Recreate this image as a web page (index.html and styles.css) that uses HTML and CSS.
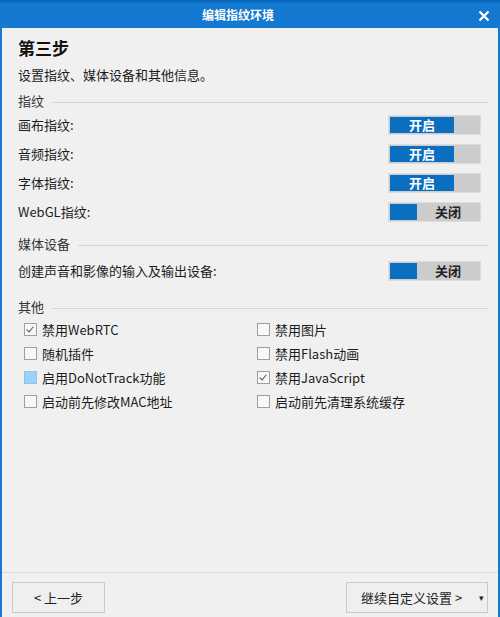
FILE: index.html
```html
<!DOCTYPE html>
<html lang="zh-CN">
  <head>
    <title>编辑指纹环境</title>
    <meta charset="UTF-8">
    <link rel="stylesheet" href="styles.css">
  </head>
  <body>
  <div class="window">
    <!--Title bar-->
    <div class="titlebar">
      <span class="title">编辑指纹环境</span>
      <svg class="close" width="12" height="12" viewBox="0 0 12 12">
        <path d="M1.5 1.5 L10.5 10.5 M10.5 1.5 L1.5 10.5" stroke="#fff" stroke-width="2.2" fill="none"/>
      </svg>
    </div>

    <div class="content">
      <h1>第三步</h1>
      <p class="subtitle">设置指纹、媒体设备和其他信息。</p>

      <!--Fingerprint section-->
      <div class="section-head"><span>指纹</span><span class="rule"></span></div>
      <div class="row">
        <span>画布指纹:</span>
        <span class="toggle on"><span class="knob">开启</span></span>
      </div>
      <div class="row">
        <span>音频指纹:</span>
        <span class="toggle on"><span class="knob">开启</span></span>
      </div>
      <div class="row">
        <span>字体指纹:</span>
        <span class="toggle on"><span class="knob">开启</span></span>
      </div>
      <div class="row">
        <span>WebGL指纹:</span>
        <span class="toggle off"><span class="knob"></span><span class="state">关闭</span></span>
      </div>

      <!--Media section-->
      <div class="section-head media"><span>媒体设备</span><span class="rule"></span></div>
      <div class="row single">
        <span>创建声音和影像的输入及输出设备:</span>
        <span class="toggle off"><span class="knob"></span><span class="state">关闭</span></span>
      </div>

      <!--Other options-->
      <div class="section-head other"><span>其他</span><span class="rule"></span></div>
      <div class="checks">
        <label class="check"><span class="box checked"></span>禁用WebRTC</label>
        <label class="check"><span class="box"></span>禁用图片</label>
        <label class="check"><span class="box"></span>随机插件</label>
        <label class="check"><span class="box"></span>禁用Flash动画</label>
        <label class="check"><span class="box hover"></span>启用DoNotTrack功能</label>
        <label class="check"><span class="box checked"></span>禁用JavaScript</label>
        <label class="check"><span class="box"></span>启动前先修改MAC地址</label>
        <label class="check"><span class="box"></span>启动前先清理系统缓存</label>
      </div>
    </div>

    <!--Action buttons-->
    <div class="footer">
      <button class="button back">&lt; 上一步</button>
      <button class="button next"><span>继续自定义设置 &gt;</span><span class="caret">&#9662;</span></button>
    </div>
  </div>
  </body>
</html>
```

FILE: styles.css
```css
body {
	margin: 0;
	font-family: "Noto Sans CJK SC", "Noto Sans", sans-serif;
	font-size: 13px;
	color: #1c1c1c;
}
.window {
	width: 500px;
	height: 617px;
	box-sizing: border-box;
	display: flex;
	flex-direction: column;
	background: #f0f0f0;
	border-left: 2px solid #1479d0;
	border-right: 2px solid #1479d0;
}
.titlebar {
	height: 28px;
	margin: 0 -2px;
	background: linear-gradient(#0a68bd 0, #0a68bd 2px, #1479d0 3px);
	display: flex;
	align-items: center;
	justify-content: center;
	position: relative;
	padding-right: 24px;
}
.title {
	color: #fff;
	font-size: 12px;
	font-weight: bold;
}
.close {
	position: absolute;
	right: 10px;
	top: 10px;
}
.content {
	flex: 1;
	padding: 8px 10px 0 16px;
}
h1 {
	margin: 0;
	font-size: 17px;
	line-height: 24px;
	font-weight: bold;
	color: #111;
}
.subtitle {
	margin: 5px 0 0 0;
	line-height: 20px;
}
.section-head {
	display: flex;
	align-items: center;
	gap: 8px;
	line-height: 18px;
	margin-top: 7px;
	color: #333;
}
.section-head.media { margin-top: 9px; }
.section-head.other { margin-top: 13px; }
.rule {
	flex: 1;
	height: 1px;
	background: #d6d6d6;
	margin-top: 2px;
}
.row {
	height: 29px;
	display: flex;
	align-items: center;
	justify-content: space-between;
	padding-right: 7px;
}
.row.single { margin-top: 3px; }
.toggle {
	width: 93px;
	height: 20px;
	box-sizing: border-box;
	border: 1px solid #dcdcdc;
	background: #cccccc;
	padding: 1px;
	display: flex;
	font-weight: bold;
	font-size: 13px;
}
.knob {
	background: #0b6fc1;
	color: #fff;
	display: flex;
	align-items: center;
	justify-content: center;
}
.on .knob { width: 64px; }
.off .knob { width: 27px; }
.state {
	flex: 1;
	display: flex;
	align-items: center;
	justify-content: center;
	color: #222;
}
.checks {
	display: grid;
	grid-template-columns: 233px 1fr;
	margin: 1px 0 0 6px;
}
.check {
	height: 24px;
	display: flex;
	align-items: center;
	gap: 5px;
}
.box {
	width: 11px;
	height: 11px;
	border: 1px solid #a0a0a0;
	background: #f7f7f7;
	position: relative;
}
.box.hover {
	background: #9fd0f8;
	border-color: #8cc4f0;
}
.box.checked::after {
	content: "";
	position: absolute;
	left: 3px;
	top: 1px;
	width: 3px;
	height: 6px;
	border: solid #555;
	border-width: 0 1.5px 1.5px 0;
	transform: rotate(40deg);
}
.footer {
	height: 45px;
	box-sizing: border-box;
	border-top: 1px solid #d9d9d9;
	padding: 9px 10px 5px 10px;
	display: flex;
	justify-content: space-between;
}
.button {
	height: 31px;
	border: 1px solid #cacaca;
	background: #efefef;
	font-family: "Noto Sans CJK SC", "Noto Sans", sans-serif;
	font-size: 13px;
	color: #222;
	padding: 0;
}
.back {
	width: 93px;
}
.next {
	width: 142px;
	display: flex;
	align-items: center;
	padding-left: 14px;
}
.caret {
	margin-left: auto;
	margin-right: 3px;
	font-size: 9px;
}
```
